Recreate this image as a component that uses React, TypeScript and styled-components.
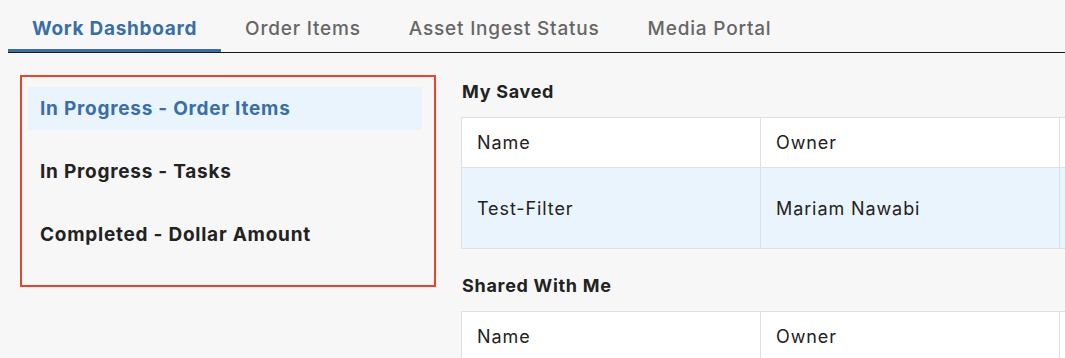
import styled, { createGlobalStyle } from "styled-components";

const GlobalStyle = createGlobalStyle`
  html, body {
    margin: 0;
    padding: 0;
    background: #f7f7f7;
    font-family: Inter, "Liberation Sans", sans-serif;
    color: #222;
    overflow: hidden;
  }
`;

const Page = styled.div`
  width: 1065px;
  height: 358px;
  overflow: hidden;
`;

const TabBar = styled.nav`
  display: flex;
  height: 52px;
  margin-left: 8px;
  border-bottom: 1px solid #1a1a1a;
`;

const Tab = styled.a<{ $active?: boolean }>`
  display: flex;
  align-items: center;
  padding: 7px 24px 0;
  font-size: 19px;
  letter-spacing: ${(p) => (p.$active ? "0.7px" : "0.8px")};
  font-weight: ${(p) => (p.$active ? 700 : 500)};
  color: ${(p) => (p.$active ? "#3a6fa6" : "#666")};
  border-bottom: 3px solid ${(p) => (p.$active ? "#3a6fa6" : "transparent")};
  box-sizing: border-box;
  white-space: nowrap;
  cursor: pointer;
`;

const Main = styled.div`
  display: flex;
  align-items: flex-start;
  gap: 25px;
  padding: 22px 0 0 20px;
`;

const ListBox = styled.ul`
  list-style: none;
  margin: 0;
  width: 416px;
  height: 212px;
  flex: none;
  box-sizing: border-box;
  border: 2px solid #e8432b;
  padding: 10px 12px 0 6px;
  display: flex;
  flex-direction: column;
  gap: 20px;
`;

const ListItem = styled.li<{ $active?: boolean }>`
  height: 43px;
  display: flex;
  align-items: center;
  padding-left: 12px;
  font-size: 19px;
  letter-spacing: 0.75px;
  font-weight: 700;
  white-space: nowrap;
  color: ${(p) => (p.$active ? "#3a6fa6" : "#222")};
  background: ${(p) => (p.$active ? "#eaf4fd" : "transparent")};
`;

const Column = styled.div`
  flex: 1;
  padding-top: 5px;
  min-width: 0;
`;

const Heading = styled.h3`
  margin: 0 0 13px 1px;
  font-size: 18px;
  letter-spacing: 0.7px;
  line-height: 24px;
  font-weight: 700;
  color: #222;
`;

const Section = styled.section`
  margin-bottom: 25px;
`;

const Table = styled.table`
  border-collapse: collapse;
  width: 897px;
  table-layout: fixed;
  background: #fff;
  border: 1px solid #e0e0e0;
`;

const Cell = styled.td<{ $tall?: boolean }>`
  width: 299px;
  box-sizing: border-box;
  height: ${(p) => (p.$tall ? "81px" : "50px")};
  padding: 0 15px;
  border: 1px solid #e0e0e0;
  font-size: 18px;
  letter-spacing: 0.9px;
  font-weight: 400;
  color: #222;
  text-align: left;
  white-space: nowrap;
`;

const Row = styled.tr<{ $selected?: boolean }>`
  background: ${(p) => (p.$selected ? "#eaf4fd" : "#fff")};
`;

export default function App() {
  return (
    <Page>
      <GlobalStyle />
      <TabBar>
        <Tab $active>Work Dashboard</Tab>
        <Tab>Order Items</Tab>
        <Tab>Asset Ingest Status</Tab>
        <Tab>Media Portal</Tab>
      </TabBar>
      <Main>
        <ListBox>
          <ListItem $active>In Progress - Order Items</ListItem>
          <ListItem>In Progress - Tasks</ListItem>
          <ListItem>Completed - Dollar Amount</ListItem>
        </ListBox>
        <Column>
          <Section>
            <Heading>My Saved</Heading>
            <Table>
              <tbody>
                <Row>
                  <Cell>Name</Cell>
                  <Cell>Owner</Cell>
                  <Cell />
                </Row>
                <Row $selected>
                  <Cell $tall>Test-Filter</Cell>
                  <Cell $tall>Mariam Nawabi</Cell>
                  <Cell $tall />
                </Row>
              </tbody>
            </Table>
          </Section>
          <Section>
            <Heading>Shared With Me</Heading>
            <Table>
              <tbody>
                <Row>
                  <Cell>Name</Cell>
                  <Cell>Owner</Cell>
                  <Cell />
                </Row>
              </tbody>
            </Table>
          </Section>
        </Column>
      </Main>
    </Page>
  );
}
